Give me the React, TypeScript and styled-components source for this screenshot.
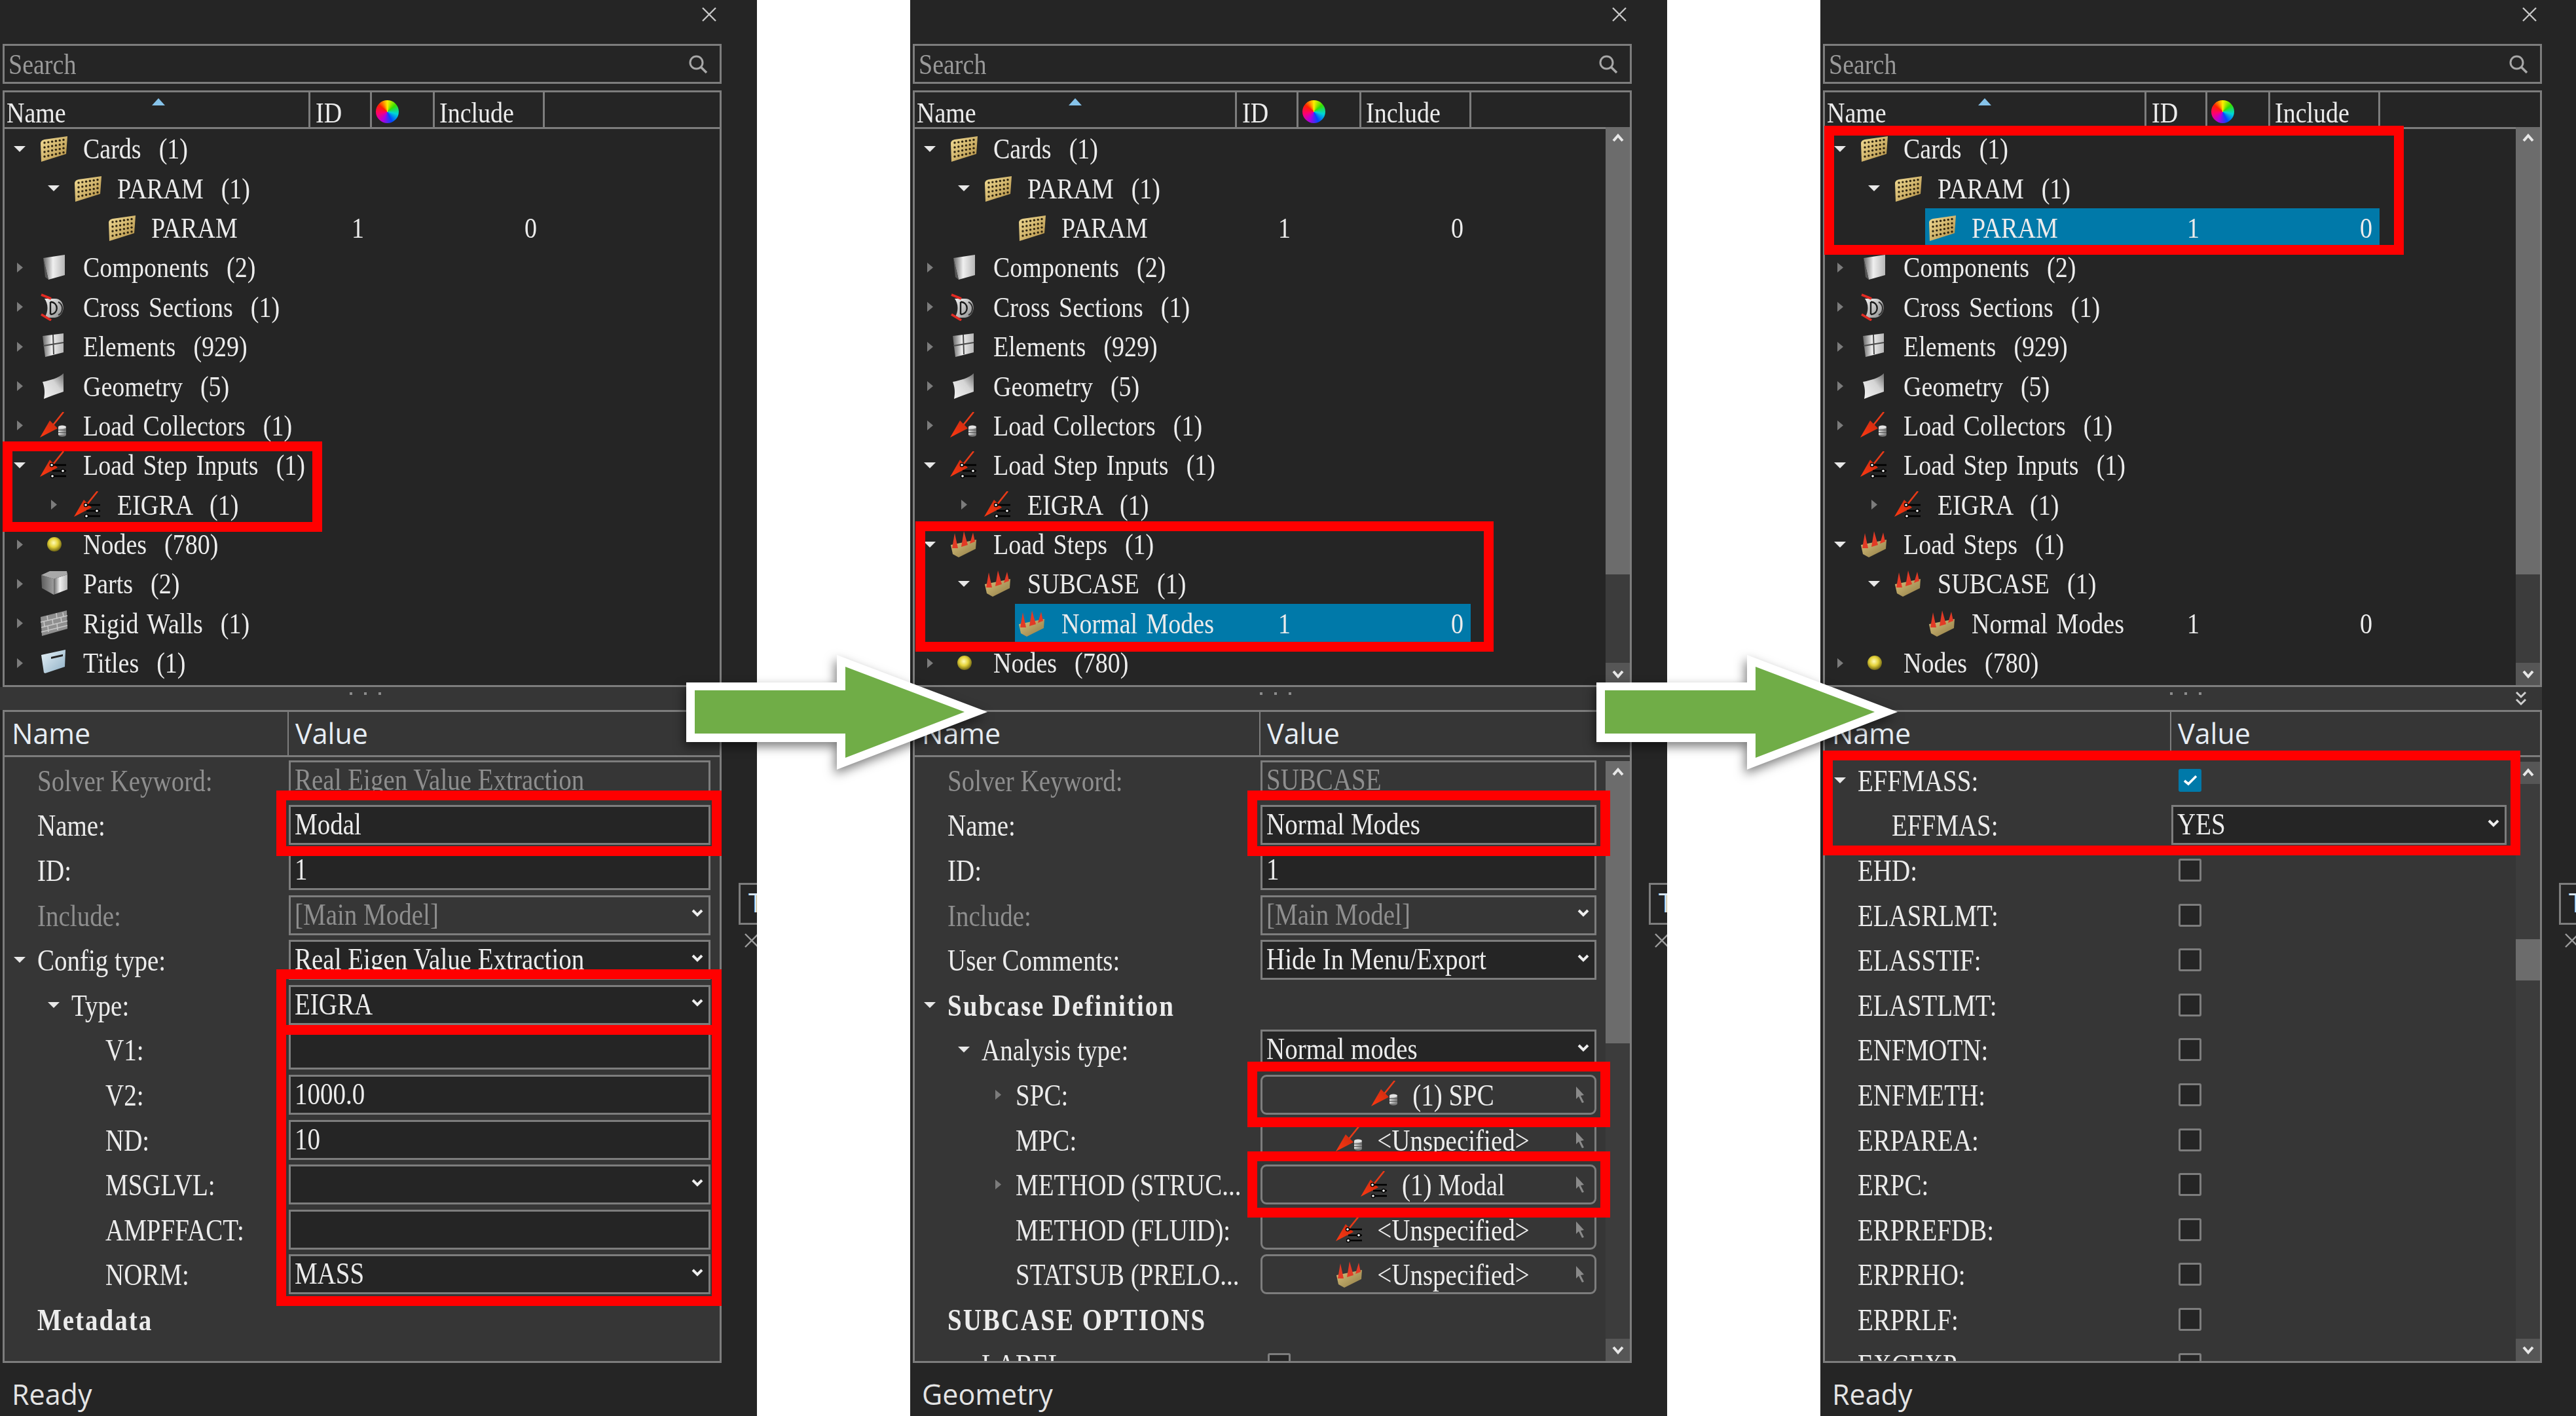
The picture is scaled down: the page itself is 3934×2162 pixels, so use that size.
import React from "react";
import styled, { createGlobalStyle } from "styled-components";

const GlobalStyle = createGlobalStyle`
  html, body { margin: 0; padding: 0; background: #fff; overflow: hidden; }
  #root { width: 3934px; height: 2162px; overflow: hidden; }
`;

const DARK = "#252525";
const MID = "#363636";
const LINE = "#7d7d7d";
const SERIF = `"Liberation Serif", "Noto Sans CJK TC", serif`;
const SANS = `"Open Sans", "Liberation Sans", sans-serif`;

/* ---------- layout ---------- */
const Page = styled.div`
  position: relative;
  display: flex;
  gap: 234px;
  width: 3934px;
  height: 2162px;
  overflow: hidden;
  background: #fff;
`;
const Panel = styled.section`
  position: relative;
  flex: 0 0 1156px;
  display: flex;
  height: 2162px;
  overflow: hidden;
  background: ${DARK};
  color: #ececec;
  font-family: ${SERIF};
  font-size: 38px;
`;
const Main = styled.div`
  flex: 0 0 1102px;
  height: 2162px;
  display: flex;
  flex-direction: column;
`;
const Side = styled.aside`
  flex: 1;
  padding-top: 1348px;
  overflow: hidden;
`;
const SideTab = styled.div`
  box-sizing: border-box;
  margin-left: 26px;
  width: 60px;
  height: 64px;
  padding-left: 12px;
  border: 3px solid ${LINE};
  font: 40px/54px ${SANS};
  color: #d8e6f2;
`;
const SideClose = styled.svg`
  display: block;
  margin: 12px 0 0 34px;
`;
const TopBar = styled.div`
  flex: 0 0 67px;
  display: flex;
  justify-content: flex-end;
  padding: 11px 8px 0 0;
  box-sizing: border-box;
`;
const SearchBox = styled.div`
  flex: 0 0 61px;
  box-sizing: border-box;
  width: 1098px;
  margin: 0 0 10px 4px;
  padding: 0 18px 0 6px;
  border: 3px solid ${LINE};
  display: flex;
  align-items: center;
  justify-content: space-between;
  color: #9a9a9a;
`;
const TreeBox = styled.div`
  flex: 0 0 911px;
  min-height: 0;
  box-sizing: border-box;
  width: 1098px;
  margin-left: 4px;
  border: 3px solid ${LINE};
  display: flex;
  flex-direction: column;
`;
const TreeHead = styled.div`
  flex: 0 0 56px;
  box-sizing: border-box;
  display: flex;
  border-bottom: 3px solid ${LINE};
`;
const HeadCell = styled.div<{ $w: number; $pad: number }>`
  position: relative;
  flex: 0 0 ${(p) => p.$w}px;
  box-sizing: border-box;
  padding: 10px 0 0 ${(p) => p.$pad}px;
  border-right: 3px solid ${LINE};
  line-height: 42px;
`;
const SortArrow = styled.i<{ $x: number }>`
  position: absolute;
  top: 9px;
  left: ${(p) => p.$x}px;
  width: 0;
  height: 0;
  border-left: 10px solid transparent;
  border-right: 10px solid transparent;
  border-bottom: 11px solid #86c3ea;
`;
const ColorWheel = styled.i`
  display: block;
  width: 35px;
  height: 35px;
  margin-top: 2px;
  border-radius: 50%;
  background: conic-gradient(#ffee00, #35e000, #00d8d8, #0048ff, #b000e0, #ff0070, #ff2000, #ffee00);
`;
const TreeBody = styled.div`
  flex: 1;
  min-height: 0;
  display: flex;
`;
const Rows = styled.div`
  flex: 1;
  min-width: 0;
  overflow: hidden;
`;
const TreeRow = styled.div<{ $level: number }>`
  display: flex;
  align-items: center;
  height: 60.4px;
  padding-left: ${(p) => 8 + p.$level * 52}px;
`;
const CaretSlot = styled.span`
  flex: 0 0 30px;
  margin-right: 11px;
  display: flex;
  align-items: center;
  justify-content: center;
`;
const TreeMain = styled.div<{ $w: number; $sel?: boolean }>`
  flex: 0 0 ${(p) => p.$w}px;
  box-sizing: border-box;
  height: 100%;
  display: flex;
  align-items: center;
  padding-left: 4px;
  background: ${(p) => (p.$sel ? "#0079a9" : "transparent")};
`;
const TreeName = styled.span`
  flex: 1;
  min-width: 0;
  margin-left: 21px;
  word-spacing: 4px;
`;
const NumCell = styled.span<{ $w: number }>`
  flex: 0 0 ${(p) => p.$w}px;
  box-sizing: border-box;
  padding-right: 11px;
  text-align: right;
`;
const Txt = styled.span`
  display: inline-block;
  white-space: pre;
  transform: scaleY(1.19);
`;
const Splitter = styled.div`
  position: relative;
  flex: 0 0 35px;
  box-sizing: border-box;
  display: flex;
  justify-content: center;
  gap: 18px;
  padding: 8px 0 0 14px;
  background: ${MID};
`;
const Dot = styled.i`
  width: 4px;
  height: 4px;
  background: #8c8c8c;
`;
const CollapseIcon = styled.svg`
  position: absolute;
  right: 23px;
  top: 6px;
`;
const PropBox = styled.div`
  flex: 0 0 997px;
  min-height: 0;
  box-sizing: border-box;
  width: 1098px;
  margin-left: 4px;
  border: 3px solid ${LINE};
  background: ${MID};
  display: flex;
  flex-direction: column;
`;
const PropHead = styled.div<{ $sep: number }>`
  flex: 0 0 62px;
  box-sizing: border-box;
  display: grid;
  grid-template-columns: ${(p) => p.$sep - 7}px 1fr;
  border-bottom: 3px solid ${LINE};
  font: 43px/66px ${SANS};
  color: #e6edf4;
`;
const PropHeadCell = styled.div<{ $pad: number; $line?: boolean }>`
  padding-left: ${(p) => p.$pad}px;
  border-right: ${(p) => (p.$line ? `2px solid ${LINE}` : "none")};
`;
const PropBody = styled.div`
  flex: 1;
  min-height: 0;
  display: flex;
`;
const PropRows = styled.div`
  flex: 1;
  min-width: 0;
  padding-top: 1px;
  overflow: hidden;
`;
const PropRow = styled.div<{ $sep: number }>`
  display: grid;
  grid-template-columns: ${(p) => p.$sep - 7}px 1fr;
  height: 68.6px;
  font-size: 39px;
`;
const NameCell = styled.div<{ $level: number; $muted?: boolean; $bold?: boolean }>`
  display: flex;
  align-items: center;
  padding-left: ${(p) => 8 + p.$level * 52}px;
  color: ${(p) => (p.$muted ? "#8e8e8e" : "#ececec")};
  font-weight: ${(p) => (p.$bold ? 700 : 400)};
  letter-spacing: ${(p) => (p.$bold ? "2px" : "0")};
`;
const PropCaret = styled.span`
  flex: 0 0 30px;
  margin-right: 12px;
  display: flex;
  align-items: center;
  justify-content: center;
`;
const ValueCell = styled.div`
  display: flex;
  align-items: center;
  padding-right: 14px;
  min-width: 0;
`;
const Field = styled.div<{ $disabled?: boolean }>`
  flex: 1;
  height: 61px;
  box-sizing: border-box;
  display: flex;
  align-items: center;
  justify-content: space-between;
  padding: 0 8px 4px 6px;
  border: 3px solid ${LINE};
  background: ${(p) => (p.$disabled ? "transparent" : DARK)};
  color: ${(p) => (p.$disabled ? "#8e8e8e" : "#ececec")};
`;
const RefButton = styled.div`
  position: relative;
  flex: 1;
  height: 61px;
  box-sizing: border-box;
  display: flex;
  align-items: center;
  justify-content: center;
  gap: 18px;
  padding-left: 12px;
  border: 3px solid ${LINE};
  border-radius: 9px;
`;
const PickIcon = styled.svg`
  position: absolute;
  right: 14px;
  top: 14px;
`;
const CheckBox = styled.div<{ $on?: boolean }>`
  width: 35px;
  height: 35px;
  box-sizing: border-box;
  margin-left: 11px;
  display: flex;
  align-items: center;
  justify-content: center;
  border: 3px solid ${(p) => (p.$on ? "#0079a9" : LINE)};
  border-radius: 3px;
  background: ${(p) => (p.$on ? "#0079a9" : DARK)};
`;
const Scrollbar = styled.div<{ $inset: number }>`
  position: relative;
  flex: 0 0 37px;
  display: flex;
  flex-direction: column;
  margin-top: ${(p) => p.$inset}px;
  background: #3c3c3c;
`;
const ScrollBtn = styled.div<{ $thumb?: boolean }>`
  flex: 0 0 34px;
  display: flex;
  align-items: center;
  justify-content: center;
  background: ${(p) => (p.$thumb ? "#6c6c6c" : "#565656")};
`;
const Track = styled.div`
  flex: 1;
  min-height: 0;
`;
const Thumb = styled.div<{ $top: number; $h: number }>`
  margin-top: ${(p) => p.$top}px;
  height: ${(p) => p.$h}px;
  background: #6c6c6c;
`;
const StatusBar = styled.div`
  flex: 0 0 81px;
  box-sizing: border-box;
  padding: 18px 0 0 18px;
  font: 43px/60px ${SANS};
  color: #e4e4e4;
`;
const RedBox = styled.div<{ $x: number; $y: number; $w: number; $h: number }>`
  position: absolute;
  left: ${(p) => p.$x}px;
  top: ${(p) => p.$y}px;
  width: ${(p) => p.$w}px;
  height: ${(p) => p.$h}px;
  box-sizing: border-box;
  border: 15px solid #ff0000;
  pointer-events: none;
`;
const Arrow = styled.svg<{ $x: number }>`
  position: absolute;
  left: ${(p) => p.$x}px;
  top: 990px;
  overflow: visible;
  filter: drop-shadow(-3px 7px 8px rgba(0, 0, 0, 0.5));
`;
const Defs = styled.svg`
  display: block;
  width: 0;
  height: 0;
`;

/* ---------- icons ---------- */
type IconKind = "card" | "comp" | "cross" | "elem" | "geom" | "load" | "lsi" | "step" | "node" | "part" | "wall" | "title";

const Stack = () => (
  <g>
    <ellipse cx="35" cy="35" rx="6" ry="2.8" fill="#777" />
    <rect x="29" y="23" width="12" height="12" fill="url(#gStack)" />
    <ellipse cx="35" cy="23" rx="6" ry="2.4" fill="#e4e4e4" />
    <path d="M29 27.5h12M29 31.5h12" stroke="#555" strokeWidth="1.2" />
  </g>
);
const Spear = () => (
  <g>
    <path d="M37 0L21 20" stroke="#e83a18" strokeWidth="2.6" />
    <path d="M1 39L16 13L28 25Z" fill="url(#gRed)" />
  </g>
);
const Sliders = () => (
  <g stroke="#000" strokeWidth="2.6">
    <path d="M17 21H41M20 30H41M17 38H41" />
    <circle cx="19" cy="21" r="2.5" fill="#fff" strokeWidth="1.4" />
    <circle cx="36" cy="30" r="2.5" fill="#fff" strokeWidth="1.4" />
    <circle cx="20" cy="38" r="2.5" fill="#fff" strokeWidth="1.4" />
  </g>
);

const ICON_ART: Record<IconKind, React.ReactNode> = {
  card: (
    <g>
      <path d="M2 12Q3 8 8 7L43 2L41 29L3 41Z" fill="url(#gGold)" />
      {[0, 1, 2, 3, 4, 5].map((c) =>
        [0, 1, 2, 3].map((r) => (
          <circle key={`${c}-${r}`} cx={8 + c * 5.8} cy={12 - c * 0.9 + r * 7 - c * r * 0.12} r={1.7} fill="#2e2410" />
        ))
      )}
    </g>
  ),
  comp: (
    <g>
      <path d="M6 7L39 2V33L14 40Z" fill="url(#gPanel)" />
      <path d="M6 7L14 40L9 36Z" fill="#555" />
    </g>
  ),
  cross: (
    <g>
      <path d="M8 8H24C40 8 42 34 24 37H8C14 28 14 16 8 8Z" fill="url(#gSteel)" />
      <path d="M17 13V32M17 13C30 13 30 32 17 32" fill="none" stroke="#1c1c1c" strokeWidth="2.4" />
      <path d="M29 13C38 18 36 30 29 33" fill="none" stroke="#333" strokeWidth="2.2" />
      <path d="M3 2L18 8M3 32L18 41" stroke="#e22a22" strokeWidth="3.6" />
    </g>
  ),
  elem: (
    <g>
      <path d="M5 5L37 1V30L9 37Z" fill="url(#gPanel)" />
      <path d="M21 3L22 33M6 20L37 15" stroke="#4a4a4a" strokeWidth="2" />
    </g>
  ),
  geom: (
    <g>
      <path d="M5 14C16 12 30 8 37 1V29C26 33 16 36 7 40C9 30 8 22 5 14Z" fill="url(#gPanel2)" />
    </g>
  ),
  load: (
    <g>
      <Spear />
      <Stack />
    </g>
  ),
  lsi: (
    <g>
      <Spear />
      <Sliders />
    </g>
  ),
  step: (
    <g>
      <path d="M2 22L41 14L40 28L14 41L5 36Z" fill="url(#gGold2)" />
      <path d="M4 27L8 4L13 27ZM18 25L22 1L28 22ZM31 20L36 3L39 17Z" fill="#e23a26" />
    </g>
  ),
  node: <circle cx="23" cy="21" r="11" fill="url(#gNode)" />,
  part: (
    <g>
      <path d="M3 8L22 14V38L4 28Z" fill="url(#gFace)" />
      <path d="M22 14L43 7V30L22 38Z" fill="url(#gPanel)" />
      <path d="M3 8L16 2H42L43 7L22 14Z" fill="#a8a8a8" />
    </g>
  ),
  wall: (
    <g>
      <path d="M2 11L42 1L43 29L4 40Z" fill="#8f8f8f" />
      <path d="M2 19L43 9M3 27L43 17M3 34L43 24M12 9L13 17M26 5L27 14M36 4L37 11M7 17L8 26M20 14L21 23M33 11L34 19M13 24L14 34M27 21L28 31" stroke="#c8c8c8" strokeWidth="1.6" />
    </g>
  ),
  title: (
    <g>
      <path d="M3 9L40 1L39 27L9 37L7 36Z" fill="url(#gBlue)" />
      <path d="M18 12L36 8V11L18 15Z" fill="#222" />
    </g>
  ),
};

const Icon = ({ kind }: { kind: IconKind }) => (
  <svg width={46} height={42} viewBox="0 0 46 42" style={{ flex: "none" }}>
    {ICON_ART[kind]}
  </svg>
);

const SharedDefs = () => (
  <Defs aria-hidden="true">
    <defs>
      <linearGradient id="gGold" x1="0" y1="0" x2="1" y2="1">
        <stop offset="0" stopColor="#f2dd97" />
        <stop offset="1" stopColor="#b08d43" />
      </linearGradient>
      <linearGradient id="gGold2" x1="0" y1="0" x2="1" y2="1">
        <stop offset="0" stopColor="#d8c27c" />
        <stop offset="1" stopColor="#8e7a45" />
      </linearGradient>
      <linearGradient id="gPanel" x1="0" y1="0" x2="1" y2="0">
        <stop offset="0" stopColor="#666" />
        <stop offset="0.45" stopColor="#f0f0f0" />
        <stop offset="1" stopColor="#b6b6b6" />
      </linearGradient>
      <linearGradient id="gPanel2" x1="0" y1="1" x2="1" y2="0">
        <stop offset="0" stopColor="#f4f4f4" />
        <stop offset="0.6" stopColor="#d4d4d4" />
        <stop offset="1" stopColor="#6c6c6c" />
      </linearGradient>
      <linearGradient id="gFace" x1="0" y1="0" x2="1" y2="0">
        <stop offset="0" stopColor="#5d5d5d" />
        <stop offset="1" stopColor="#9d9d9d" />
      </linearGradient>
      <linearGradient id="gSteel" x1="0" y1="0" x2="1" y2="1">
        <stop offset="0" stopColor="#f2f2f2" />
        <stop offset="1" stopColor="#8a8a8a" />
      </linearGradient>
      <linearGradient id="gStack" x1="0" y1="0" x2="1" y2="0">
        <stop offset="0" stopColor="#dcdcdc" />
        <stop offset="1" stopColor="#777" />
      </linearGradient>
      <linearGradient id="gRed" x1="0" y1="1" x2="1" y2="0">
        <stop offset="0" stopColor="#ff3a12" />
        <stop offset="1" stopColor="#c92a10" />
      </linearGradient>
      <linearGradient id="gBlue" x1="0" y1="0" x2="1" y2="1">
        <stop offset="0" stopColor="#e7f2f8" />
        <stop offset="1" stopColor="#8fb0c6" />
      </linearGradient>
      <radialGradient id="gNode" cx="0.45" cy="0.4" r="0.6">
        <stop offset="0" stopColor="#fffbb8" />
        <stop offset="0.5" stopColor="#e5d33a" />
        <stop offset="1" stopColor="#6f6514" />
      </radialGradient>
    </defs>
  </Defs>
);

const CaretDown = () => (
  <svg width={18} height={9} viewBox="0 0 18 9">
    <path d="M0 0H18L9 9Z" fill="#e8e8e8" />
  </svg>
);
const CaretRight = () => (
  <svg width={9} height={15} viewBox="0 0 9 15">
    <path d="M0 0L9 7.5L0 15Z" fill="#7c7c7c" />
  </svg>
);
const Caret = ({ open }: { open?: boolean }) =>
  open === undefined ? null : open ? <CaretDown /> : <CaretRight />;

const Chevron = () => (
  <svg width={18} height={12} viewBox="0 0 18 12" style={{ flex: "none", marginTop: -2 }}>
    <path d="M2 2L9 9L16 2" fill="none" stroke="#eee" strokeWidth="4" />
  </svg>
);
const UpChevron = () => (
  <svg width={18} height={14} viewBox="0 0 18 14">
    <path d="M2 11L9 3L16 11" fill="none" stroke="#e8e8e8" strokeWidth="4" />
  </svg>
);
const DownChevron = () => (
  <svg width={18} height={14} viewBox="0 0 18 14">
    <path d="M2 3L9 11L16 3" fill="none" stroke="#e8e8e8" strokeWidth="4" />
  </svg>
);
const CloseX = () => (
  <svg width={22} height={22} viewBox="0 0 22 22">
    <path d="M1 1L21 21M21 1L1 21" stroke="#c8c8c8" strokeWidth="2.4" />
  </svg>
);
const Magnifier = () => (
  <svg width={30} height={30} viewBox="0 0 30 30">
    <circle cx="12.5" cy="12.5" r="9.5" fill="none" stroke="#a8a8a8" strokeWidth="3" />
    <path d="M19.5 19.5L28 28" stroke="#a8a8a8" strokeWidth="3.6" />
  </svg>
);
const Pick = () => (
  <PickIcon width={16} height={26} viewBox="0 0 16 26">
    <path d="M2 1L14 14L9 15L14 25L11 26L6 16L2 20Z" fill="#8a8a8a" />
  </PickIcon>
);
const CheckMark = () => (
  <svg width={22} height={18} viewBox="0 0 22 18">
    <path d="M2 10L8 15L20 3" fill="none" stroke="#fff" strokeWidth="3.6" />
  </svg>
);

/* ---------- data ---------- */
type TreeItem = { level: number; open?: boolean; icon: IconKind; name: string; id?: string; inc?: string; sel?: boolean };

const head: TreeItem[] = [
  { level: 0, open: true, icon: "card", name: "Cards  (1)" },
  { level: 1, open: true, icon: "card", name: "PARAM  (1)" },
  { level: 2, icon: "card", name: "PARAM", id: "1", inc: "0" },
  { level: 0, open: false, icon: "comp", name: "Components  (2)" },
  { level: 0, open: false, icon: "cross", name: "Cross Sections  (1)" },
  { level: 0, open: false, icon: "elem", name: "Elements  (929)" },
  { level: 0, open: false, icon: "geom", name: "Geometry  (5)" },
  { level: 0, open: false, icon: "load", name: "Load Collectors  (1)" },
  { level: 0, open: true, icon: "lsi", name: "Load Step Inputs  (1)" },
  { level: 1, open: false, icon: "lsi", name: "EIGRA  (1)" },
];
const treeA: TreeItem[] = [
  ...head,
  { level: 0, open: false, icon: "node", name: "Nodes  (780)" },
  { level: 0, open: false, icon: "part", name: "Parts  (2)" },
  { level: 0, open: false, icon: "wall", name: "Rigid Walls  (1)" },
  { level: 0, open: false, icon: "title", name: "Titles  (1)" },
];
const steps = (sel: boolean): TreeItem[] => [
  { level: 0, open: true, icon: "step", name: "Load Steps  (1)" },
  { level: 1, open: true, icon: "step", name: "SUBCASE  (1)" },
  { level: 2, icon: "step", name: "Normal Modes", id: "1", inc: "0", sel },
  { level: 0, open: false, icon: "node", name: "Nodes  (780)" },
];
const treeB: TreeItem[] = [...head, ...steps(true)];
const treeC: TreeItem[] = [
  ...head.map((h, i) => (i === 2 ? { ...h, sel: true } : h)),
  ...steps(false),
];

type PropItem = {
  level: number;
  open?: boolean;
  label: string;
  muted?: boolean;
  bold?: boolean;
  kind?: "text" | "select" | "ref" | "check" | "checked";
  value?: string;
  disabled?: boolean;
  icon?: IconKind;
};

const propsA: PropItem[] = [
  { level: 0, label: "Solver Keyword:", muted: true, kind: "text", value: "Real Eigen Value Extraction", disabled: true },
  { level: 0, label: "Name:", kind: "text", value: "Modal" },
  { level: 0, label: "ID:", kind: "text", value: "1" },
  { level: 0, label: "Include:", muted: true, kind: "select", value: "[Main Model]", disabled: true },
  { level: 0, open: true, label: "Config type:", kind: "select", value: "Real Eigen Value Extraction" },
  { level: 1, open: true, label: "Type:", kind: "select", value: "EIGRA" },
  { level: 2, label: "V1:", kind: "text", value: "" },
  { level: 2, label: "V2:", kind: "text", value: "1000.0" },
  { level: 2, label: "ND:", kind: "text", value: "10" },
  { level: 2, label: "MSGLVL:", kind: "select", value: "" },
  { level: 2, label: "AMPFFACT:", kind: "text", value: "" },
  { level: 2, label: "NORM:", kind: "select", value: "MASS" },
  { level: 0, label: "Metadata", bold: true },
];
const propsB: PropItem[] = [
  { level: 0, label: "Solver Keyword:", muted: true, kind: "text", value: "SUBCASE", disabled: true },
  { level: 0, label: "Name:", kind: "text", value: "Normal Modes" },
  { level: 0, label: "ID:", kind: "text", value: "1" },
  { level: 0, label: "Include:", muted: true, kind: "select", value: "[Main Model]", disabled: true },
  { level: 0, label: "User Comments:", kind: "select", value: "Hide In Menu/Export" },
  { level: 0, open: true, label: "Subcase Definition", bold: true },
  { level: 1, open: true, label: "Analysis type:", kind: "select", value: "Normal modes" },
  { level: 2, open: false, label: "SPC:", kind: "ref", value: "(1) SPC", icon: "load" },
  { level: 2, label: "MPC:", kind: "ref", value: "<Unspecified>", icon: "load" },
  { level: 2, open: false, label: "METHOD (STRUC...", kind: "ref", value: "(1) Modal", icon: "lsi" },
  { level: 2, label: "METHOD (FLUID):", kind: "ref", value: "<Unspecified>", icon: "lsi" },
  { level: 2, label: "STATSUB (PRELO...", kind: "ref", value: "<Unspecified>", icon: "step" },
  { level: 0, label: "SUBCASE OPTIONS", bold: true },
  { level: 1, label: "LABEL", kind: "check" },
];
const propsC: PropItem[] = [
  { level: 0, open: true, label: "EFFMASS:", kind: "checked" },
  { level: 1, label: "EFFMAS:", kind: "select", value: "YES" },
  ...["EHD:", "ELASRLMT:", "ELASSTIF:", "ELASTLMT:", "ENFMOTN:", "ENFMETH:", "ERPAREA:", "ERPC:", "ERPREFDB:", "ERPRHO:", "ERPRLF:", "EXCEXP:"].map(
    (label): PropItem => ({ level: 0, label, kind: "check" })
  ),
];

/* ---------- pieces ---------- */
const Value = ({ p }: { p: PropItem }) => {
  switch (p.kind) {
    case "text":
      return (
        <Field $disabled={p.disabled}>
          <Txt>{p.value}</Txt>
        </Field>
      );
    case "select":
      return (
        <Field $disabled={p.disabled}>
          <Txt>{p.value}</Txt>
          <Chevron />
        </Field>
      );
    case "ref":
      return (
        <RefButton>
          <Icon kind={p.icon as IconKind} />
          <Txt>{p.value}</Txt>
          <Pick />
        </RefButton>
      );
    case "check":
      return <CheckBox />;
    case "checked":
      return (
        <CheckBox $on>
          <CheckMark />
        </CheckBox>
      );
    default:
      return null;
  }
};

type Bar = { btnThumb?: boolean; top: number; h: number; inset: number };
const ScrollStrip = ({ bar }: { bar: Bar }) => (
  <Scrollbar $inset={bar.inset}>
    <ScrollBtn $thumb={bar.btnThumb}>
      <UpChevron />
    </ScrollBtn>
    <Track>
      <Thumb $top={bar.top} $h={bar.h} />
    </Track>
    <ScrollBtn>
      <DownChevron />
    </ScrollBtn>
  </Scrollbar>
);

type PanelProps = {
  cols: number[];
  sep: number;
  tree: TreeItem[];
  props: PropItem[];
  status: string;
  treeBar?: Bar;
  propBar?: Bar;
  sortX: number;
  collapse?: boolean;
  boxes: { x: number; y: number; w: number; h: number }[];
};

const UIPanel = ({ cols, sep, tree, props, status, treeBar, propBar, sortX, collapse, boxes }: PanelProps) => (
  <Panel>
    <Main>
      <TopBar>
        <CloseX />
      </TopBar>
      <SearchBox>
        <Txt>Search</Txt>
        <Magnifier />
      </SearchBox>
      <TreeBox>
        <TreeHead>
          <HeadCell $w={cols[0] - 6} $pad={3}>
            <SortArrow $x={sortX} />
            <Txt>Name</Txt>
          </HeadCell>
          <HeadCell $w={cols[1] - cols[0]} $pad={8}>
            <Txt>ID</Txt>
          </HeadCell>
          <HeadCell $w={cols[2] - cols[1]} $pad={6}>
            <ColorWheel />
          </HeadCell>
          <HeadCell $w={cols[3] - cols[2]} $pad={7}>
            <Txt>Include</Txt>
          </HeadCell>
        </TreeHead>
        <TreeBody>
          <Rows>
            {tree.map((t, i) => (
              <TreeRow key={i} $level={t.level}>
                <CaretSlot>
                  <Caret open={t.open} />
                </CaretSlot>
                <TreeMain $w={cols[3] - 56 - t.level * 52} $sel={t.sel}>
                  <Icon kind={t.icon} />
                  <TreeName>
                    <Txt>{t.name}</Txt>
                  </TreeName>
                  <NumCell $w={cols[1] - cols[0]}>
                    <Txt>{t.id}</Txt>
                  </NumCell>
                  <NumCell $w={cols[3] - cols[1]}>
                    <Txt>{t.inc}</Txt>
                  </NumCell>
                </TreeMain>
              </TreeRow>
            ))}
          </Rows>
          {treeBar && <ScrollStrip bar={treeBar} />}
        </TreeBody>
      </TreeBox>
      <Splitter>
        <Dot />
        <Dot />
        <Dot />
        {collapse && (
          <CollapseIcon width={18} height={24} viewBox="0 0 18 24">
            <path d="M2 2L9 9L16 2M2 13L9 20L16 13" fill="none" stroke="#cfcfcf" strokeWidth="3" />
          </CollapseIcon>
        )}
      </Splitter>
      <PropBox>
        <PropHead $sep={sep}>
          <PropHeadCell $pad={11} $line>
            Name
          </PropHeadCell>
          <PropHeadCell $pad={10}>Value</PropHeadCell>
        </PropHead>
        <PropBody>
          <PropRows>
            {props.map((p, i) => (
              <PropRow key={i} $sep={sep}>
                <NameCell $level={p.level} $muted={p.muted} $bold={p.bold}>
                  <PropCaret>
                    <Caret open={p.open} />
                  </PropCaret>
                  <Txt>{p.label}</Txt>
                </NameCell>
                <ValueCell>
                  <Value p={p} />
                </ValueCell>
              </PropRow>
            ))}
          </PropRows>
          {propBar && <ScrollStrip bar={propBar} />}
        </PropBody>
      </PropBox>
      <StatusBar>{status}</StatusBar>
    </Main>
    <Side>
      <SideTab>T</SideTab>
      <SideClose width={24} height={24} viewBox="0 0 24 24">
        <path d="M2 2L22 22M22 2L2 22" stroke="#9c9c9c" strokeWidth="2.4" />
      </SideClose>
    </Side>
    {boxes.map((b, i) => (
      <RedBox key={i} $x={b.x} $y={b.y} $w={b.w} $h={b.h} />
    ))}
  </Panel>
);

const GreenArrow = ({ x }: { x: number }) => (
  <Arrow $x={x} width={480} height={200} viewBox="0 0 480 200">
    <polygon points="8,52 238,52 238,10 468,97 238,185 238,143 8,143" fill="#fff" />
    <polygon points="21,64 251,64 251,28 433,97 251,167 251,130 21,130" fill="#70ad47" />
  </Arrow>
);

export default function App() {
  return (
    <>
      <GlobalStyle />
      <SharedDefs />
      <Page>
        <UIPanel
          cols={[473, 567, 663, 831]}
          sep={441}
          tree={treeA}
          props={propsA}
          status="Ready"
          sortX={225}
          boxes={[
            { x: 4, y: 674, w: 488, h: 138 },
            { x: 422, y: 1207, w: 680, h: 100 },
            { x: 422, y: 1480, w: 680, h: 100 },
            { x: 422, y: 1565, w: 680, h: 429 },
          ]}
        />
        <UIPanel
          cols={[498, 592, 688, 856]}
          sep={535}
          tree={treeB}
          props={propsB}
          status="Geometry"
          sortX={235}
          treeBar={{ btnThumb: true, top: 0, h: 649, inset: -3 }}
          propBar={{ btnThumb: true, top: 0, h: 397, inset: 6 }}
          boxes={[
            { x: 8, y: 796, w: 883, h: 199 },
            { x: 515, y: 1207, w: 554, h: 100 },
            { x: 515, y: 1621, w: 554, h: 100 },
            { x: 515, y: 1758, w: 554, h: 101 },
          ]}
        />
        <UIPanel
          cols={[497, 590, 686, 854]}
          sep={536}
          tree={treeC}
          props={propsC}
          status="Ready"
          sortX={234}
          collapse
          treeBar={{ btnThumb: true, top: 0, h: 649, inset: -3 }}
          propBar={{ top: 237, h: 63, inset: 7 }}
          boxes={[
            { x: 6, y: 192, w: 885, h: 197 },
            { x: 4, y: 1146, w: 1065, h: 160 },
          ]}
        />
        <GreenArrow x={1040} />
        <GreenArrow x={2430} />
      </Page>
    </>
  );
}
